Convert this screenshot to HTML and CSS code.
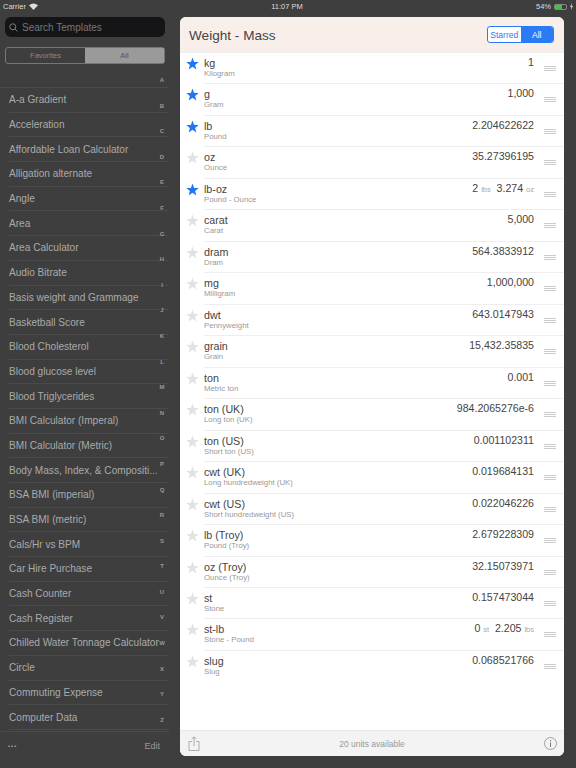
FILE: index.html
```html
<!DOCTYPE html>
<html lang="en">
<head>
    <meta charset="UTF-8">
    <title>Weight - Mass</title>
    <link rel="stylesheet" href="styles.css">
</head>
<body>
    <!-- Status bar -->
    <div class="status">
        <div class="status-left">
            <span>Carrier</span>
            <svg class="wifi" width="9" height="7" viewBox="0 0 18 14"><path d="M9 14 L0 4.5 Q9 -3 18 4.5 Z" fill="#ddd"/></svg>
        </div>
        <span class="status-time">11:07 PM</span>
        <div class="status-right">
            <span>54%</span>
            <span class="battery"><span class="battery-fill"></span></span>
            <svg width="3" height="7" viewBox="0 0 6 14"><path d="M4 0 L0 8 H2.5 L2 14 L6 6 H3.5 Z" fill="#ccc"/></svg>
        </div>
    </div>

    <div class="main">
        <!-- Template list -->
        <div class="sidebar">
            <div class="search">
                <svg width="9" height="9" viewBox="0 0 18 18"><circle cx="7.5" cy="7.5" r="6" fill="none" stroke="#888" stroke-width="1.8"/><path d="M12 12 L17 17" stroke="#888" stroke-width="1.8"/></svg>
                <span>Search Templates</span>
            </div>
            <div class="tabs">
                <div class="tab">Favorites</div>
                <div class="tab tab-on">All</div>
            </div>
            <div class="list">
                <div class="item">A-a Gradient</div>
                <div class="item">Acceleration</div>
                <div class="item">Affordable Loan Calculator</div>
                <div class="item">Alligation alternate</div>
                <div class="item">Angle</div>
                <div class="item">Area</div>
                <div class="item">Area Calculator</div>
                <div class="item">Audio Bitrate</div>
                <div class="item">Basis weight and Grammage</div>
                <div class="item">Basketball Score</div>
                <div class="item">Blood Cholesterol</div>
                <div class="item">Blood glucose level</div>
                <div class="item">Blood Triglycerides</div>
                <div class="item">BMI Calculator (Imperal)</div>
                <div class="item">BMI Calculator (Metric)</div>
                <div class="item">Body Mass, Index, &amp; Compositi...</div>
                <div class="item">BSA BMI (imperial)</div>
                <div class="item">BSA BMI (metric)</div>
                <div class="item">Cals/Hr vs BPM</div>
                <div class="item">Car Hire Purchase</div>
                <div class="item">Cash Counter</div>
                <div class="item">Cash Register</div>
                <div class="item">Chilled Water Tonnage Calculator</div>
                <div class="item">Circle</div>
                <div class="item">Commuting Expense</div>
                <div class="item">Computer Data</div>
            </div>
            <!-- A-Z index sits over the list -->
            <div class="index">
                <span>A</span><span>B</span><span>C</span><span>D</span><span>E</span><span>F</span><span>G</span>
                <span>H</span><span>I</span><span>J</span><span>K</span><span>L</span><span>M</span><span>N</span>
                <span>O</span><span>P</span><span>Q</span><span>R</span><span>S</span><span>T</span><span>U</span>
                <span>V</span><span>W</span><span>X</span><span>Y</span><span>Z</span>
            </div>
            <div class="side-foot">
                <span class="dots">&bull;&bull;&bull;</span>
                <span>Edit</span>
            </div>
        </div>

        <!-- Units panel -->
        <div class="panel">
            <div class="panel-head">
                <h2>Weight - Mass</h2>
                <div class="switch">
                    <div class="switch-btn">Starred</div>
                    <div class="switch-btn switch-on">All</div>
                </div>
            </div>
            <div class="rows" id="rows"></div>
            <div class="panel-foot">
                <svg class="share" width="12" height="15" viewBox="0 0 12 15"><path d="M4 5.5 H1 V14.5 H11 V5.5 H8 M6 10 V0.8 M3.8 3 L6 0.8 L8.2 3" fill="none" stroke="#999" stroke-width="0.8"/></svg>
                <span>20 units available</span>
                <svg class="info" width="13" height="13" viewBox="0 0 26 26"><circle cx="13" cy="13" r="12" fill="none" stroke="#777" stroke-width="1.3"/><circle cx="13" cy="7.5" r="1.4" fill="#777"/><path d="M13 11 V20" stroke="#777" stroke-width="2"/></svg>
            </div>
        </div>
    </div>

    <script>
        var units = [
            ['kg', 'Kilogram', '1', 1],
            ['g', 'Gram', '1,000', 1],
            ['lb', 'Pound', '2.204622622', 1],
            ['oz', 'Ounce', '35.27396195', 0],
            ['lb-oz', 'Pound - Ounce', '2 <small>lbs</small> &nbsp;3.274 <small>oz</small>', 1],
            ['carat', 'Carat', '5,000', 0],
            ['dram', 'Dram', '564.3833912', 0],
            ['mg', 'Milligram', '1,000,000', 0],
            ['dwt', 'Pennyweight', '643.0147943', 0],
            ['grain', 'Grain', '15,432.35835', 0],
            ['ton', 'Metric ton', '0.001', 0],
            ['ton (UK)', 'Long ton (UK)', '984.2065276e-6', 0],
            ['ton (US)', 'Short ton (US)', '0.001102311', 0],
            ['cwt (UK)', 'Long hundredweight (UK)', '0.019684131', 0],
            ['cwt (US)', 'Short hundredweight (US)', '0.022046226', 0],
            ['lb (Troy)', 'Pound (Troy)', '2.679228309', 0],
            ['oz (Troy)', 'Ounce (Troy)', '32.15073971', 0],
            ['st', 'Stone', '0.157473044', 0],
            ['st-lb', 'Stone - Pound', '0 <small>st</small> &nbsp;2.205 <small>lbs</small>', 0],
            ['slug', 'Slug', '0.068521766', 0]
        ];

        var html = '';
        units.forEach(function (u) {
            html += '<div class="row">' +
                '<svg class="star" width="13" height="13" viewBox="0 0 24 24"><path class="' + (u[3] ? 'star-on' : 'star-off') + '" d="M12 1 L15 9 L23.5 9.4 L16.8 14.7 L19.1 23 L12 18.2 L4.9 23 L7.2 14.7 L0.5 9.4 L9 9 Z"/></svg>' +
                '<div class="names"><div class="name">' + u[0] + '</div><div class="sub">' + u[1] + '</div></div>' +
                '<div class="value">' + u[2] + '</div>' +
                '<div class="handle"><i></i><i></i><i></i></div>' +
                '</div>';
        });
        document.getElementById('rows').innerHTML = html;
    </script>
</body>
</html>
```

FILE: styles.css
```css
body {
    margin: 0;
    width: 576px;
    height: 768px;
    overflow: hidden;
    background-color: #3e3e3e;
    font-family: "Liberation Sans", Arial, sans-serif;
    color: #444;
}

.status {
    height: 17px;
    display: flex;
    justify-content: space-between;
    align-items: center;
    padding: 0 3px;
    font-size: 7.5px;
    color: #ddd;
    position: relative;
    top: -2px;
}

.status-left,
.status-right {
    display: flex;
    align-items: center;
    gap: 3px;
}

.battery {
    width: 13px;
    height: 6px;
    border: 1px solid #888;
    border-radius: 2px;
    box-sizing: border-box;
    display: flex;
    padding: 0;
}

.battery-fill {
    width: 7px;
    background-color: #3ec43e;
}

.main {
    display: flex;
    height: 751px;
}

.sidebar {
    width: 180px;
    position: relative;
    display: flex;
    flex-direction: column;
}

.search {
    margin: 0 15px 0 5px;
    height: 20px;
    background-color: #151518;
    border-radius: 6px;
    display: flex;
    align-items: center;
    gap: 4px;
    padding-left: 4px;
    font-size: 10px;
    color: #777;
}

.tabs {
    margin: 10px 15px 0 5px;
    height: 17px;
    box-sizing: border-box;
    border: 1px solid #777;
    border-radius: 3px;
    display: flex;
    font-size: 7.5px;
    color: #8a8a8a;
}

.tab {
    flex: 1;
    display: flex;
    align-items: center;
    justify-content: center;
}

.tab-on {
    background-color: #9a9a9a;
    color: #555;
}

.list {
    margin-top: 23px;
    border-top: 1px solid #4a4a4a;
    width: 169px;
    flex: 1;
    overflow: hidden;
}

.item {
    height: 23.7px;
    margin-left: 9px;
    border-bottom: 1px solid #4a4a4a;
    font-size: 10.1px;
    color: #aaa;
    display: flex;
    align-items: center;
    white-space: nowrap;
}

.index {
    position: absolute;
    top: 57px;
    left: 159px;
    width: 6px;
    display: flex;
    flex-direction: column;
    font-size: 6px;
    font-weight: 700;
    color: #999;
    text-align: center;
}

.index span {
    height: 25.6px;
    line-height: 12px;
}

.side-foot {
    height: 37px;
    flex: none;
    box-sizing: border-box;
    margin-right: 11px;
    border-top: 1px solid #4a4a4a;
    display: flex;
    justify-content: space-between;
    align-items: center;
    padding: 0 9px 8px 8px;
    font-size: 9px;
    color: #999;
}

.dots {
    font-size: 6px;
    letter-spacing: 1px;
    color: #aaa;
}

.panel {
    width: 384px;
    height: 739px;
    background-color: #fff;
    border-radius: 6px;
    overflow: hidden;
    display: flex;
    flex-direction: column;
}

.panel-head {
    height: 35px;
    flex: none;
    background-color: #f9efea;
    display: flex;
    justify-content: space-between;
    align-items: center;
    padding: 0 10px 0 9px;
    border-bottom: 1px solid #eee;
}

.panel-head h2 {
    margin: 1px 0 0;
    font-size: 13.6px;
    font-weight: 400;
    color: #444;
}

.switch {
    display: flex;
    width: 67px;
    height: 17px;
    box-sizing: border-box;
    border: 1px solid #2b7bf6;
    border-radius: 3px;
    font-size: 8.5px;
    overflow: hidden;
    background-color: #fff;
}

.switch-btn {
    flex: 1;
    display: flex;
    align-items: center;
    justify-content: center;
    color: #2b7bf6;
}

.switch-on {
    background-color: #2b7bf6;
    color: #fff;
}

.rows {
    flex: 1;
}

.row {
    height: 31.47px;
    box-sizing: border-box;
    position: relative;
    display: flex;
    padding-left: 24px;
}

.row::after {
    content: "";
    position: absolute;
    left: 24px;
    right: 0;
    bottom: 0;
    border-bottom: 1px solid #eee;
}

.row:last-child::after {
    display: none;
}

.star {
    position: absolute;
    left: 6px;
    top: 4px;
}

.star-on {
    fill: #1f77f2;
}

.star-off {
    fill: #e2e2e2;
}

.names {
    flex: 1;
    padding-top: 4px;
}

.name {
    font-size: 10.7px;
    line-height: 12px;
    color: #444;
}

.sub {
    font-size: 7.8px;
    line-height: 9px;
    color: #999;
}

.value {
    font-size: 10.6px;
    line-height: 12px;
    padding-top: 3px;
    color: #444;
}

.value small {
    font-size: 7.5px;
    color: #aaa;
}

.handle {
    width: 12px;
    margin: 13px 8px 0 10px;
    display: flex;
    flex-direction: column;
    gap: 1px;
}

.handle i {
    display: block;
    height: 1px;
    background-color: #ccc;
}

.panel-foot {
    height: 25px;
    flex: none;
    background-color: #f3f3f3;
    border-top: 1px solid #e8e8e8;
    display: flex;
    justify-content: space-between;
    align-items: center;
    padding: 0 7px 0 8px;
    font-size: 8.5px;
    color: #999;
}
```
